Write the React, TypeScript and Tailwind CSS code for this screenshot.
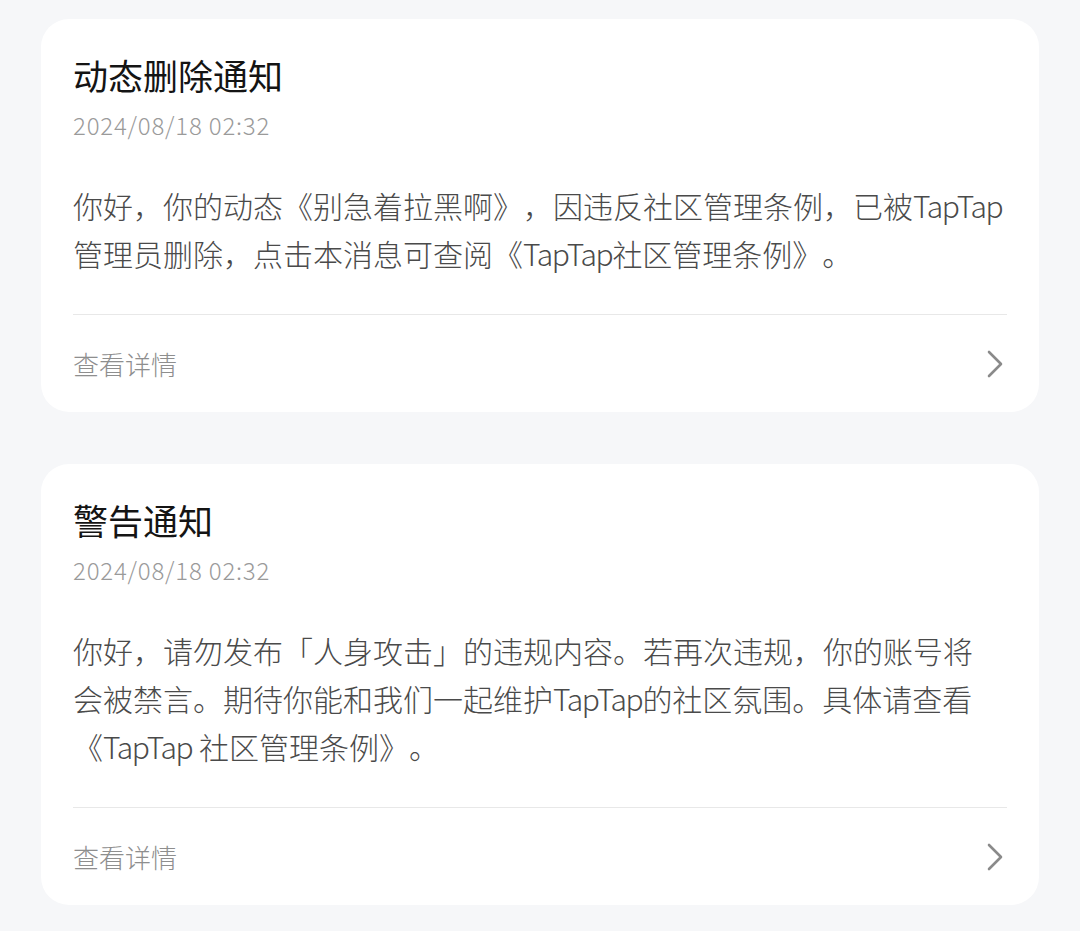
const font = {
  fontFamily: '"Noto Sans CJK SC", "Noto Sans", sans-serif',
};

type Notice = {
  title: string;
  time: string;
  lines: string[];
};

const notices: Notice[] = [
  {
    title: "动态删除通知",
    time: "2024/08/18 02:32",
    lines: [
      "你好，你的动态《别急着拉黑啊》，因违反社区管理条例，已被TapTap",
      "管理员删除，点击本消息可查阅《TapTap社区管理条例》。",
    ],
  },
  {
    title: "警告通知",
    time: "2024/08/18 02:32",
    lines: [
      "你好，请勿发布「人身攻击」的违规内容。若再次违规，你的账号将",
      "会被禁言。期待你能和我们一起维护TapTap的社区氛围。具体请查看",
      "《TapTap 社区管理条例》。",
    ],
  },
];

// the brand name runs a little narrower than Noto's latin
function Line({ text }: { text: string }) {
  const parts = text.split("TapTap");
  return (
    <div>
      {parts.map((p, i) => (
        <span key={i}>
          {p}
          {i < parts.length - 1 && (
            <span className="tracking-[-1.3px]">TapTap</span>
          )}
        </span>
      ))}
    </div>
  );
}

function Chevron() {
  return (
    <svg width="16" height="28" viewBox="0 0 16 28" fill="none">
      <path
        d="M2 2 L14 14 L2 26"
        stroke="#8a8a8a"
        strokeWidth="2.6"
        strokeLinecap="round"
        strokeLinejoin="round"
      />
    </svg>
  );
}

function NoticeCard({ notice }: { notice: Notice }) {
  return (
    <div className="bg-white rounded-[28px] px-8 pt-8">
      <h2 className="text-[35px] leading-[48px] font-normal text-[#141414]">
        {notice.title}
      </h2>
      <p className="mt-2 text-[24px] leading-[36px] font-light text-[#9a9a9a] tracking-[0.8px]">
        {notice.time}
      </p>
      <div className="mt-[38px] text-[30px] leading-[48px] font-light text-[#4a4a4a] whitespace-nowrap [text-spacing-trim:space-all]">
        {notice.lines.map((line, i) => (
          <Line key={i} text={line} />
        ))}
      </div>
      <div className="mt-[37px] h-px bg-[#e8e8e8]" />
      <div className="h-[97px] flex items-center justify-between">
        <span className="text-[26px] font-light text-[#8e8e8e]">查看详情</span>
        <span className="mr-1">
          <Chevron />
        </span>
      </div>
    </div>
  );
}

export default function App() {
  return (
    <div
      className="min-h-[931px] bg-[#f6f7f9] px-[41px] pt-[19px] pb-[26px] flex flex-col gap-[52px]"
      style={font}
    >
      {notices.map((n, i) => (
        <NoticeCard key={i} notice={n} />
      ))}
    </div>
  );
}
